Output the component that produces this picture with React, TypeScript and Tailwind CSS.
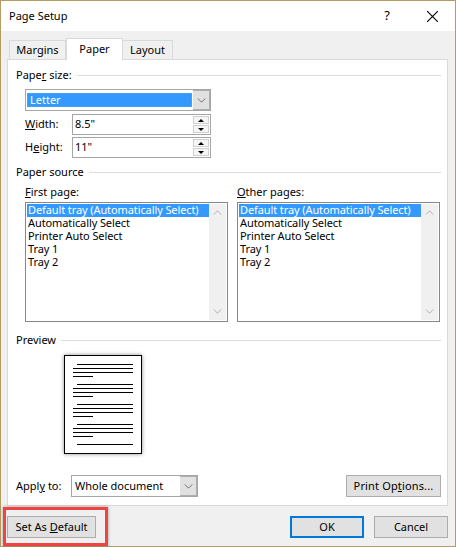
import type { ReactNode } from "react";

const trays = ["Default tray (Automatically Select)", "Automatically Select", "Printer Auto Select", "Tray 1", "Tray 2"];

function Heading({ children }: { children: ReactNode }) {
  return (
    <div className="flex h-[14px] items-center gap-[5px]">
      <span className="leading-[14px]">{children}</span>
      <div className="h-px flex-1 bg-[#dcdcdc]" />
    </div>
  );
}

function Chevron({ className }: { className: string }) {
  return (
    <svg viewBox="0 0 10 6" className={className} fill="none" stroke="currentColor" strokeWidth="1">
      <path d="M0.5 0.5 L5 5 L9.5 0.5" />
    </svg>
  );
}

function DropButton() {
  return (
    <div className="flex w-[17px] items-center justify-center self-stretch border border-l-0 border-[#adadad] bg-[#e1e1e1] text-[#5a5a5a]">
      <Chevron className="h-[5px] w-[9px]" />
    </div>
  );
}

function Spinner() {
  return (
    <div className="my-px mr-px flex w-[16px] flex-col gap-px self-stretch">
      <div className="flex flex-1 items-center justify-center border border-[#d0d0d0] bg-[#f5f5f5]">
        <div className="h-0 w-0 border-x-[3px] border-b-[3px] border-x-transparent border-b-black" />
      </div>
      <div className="flex flex-1 items-center justify-center border border-[#d0d0d0] bg-[#f5f5f5]">
        <div className="h-0 w-0 border-x-[3px] border-t-[3px] border-x-transparent border-t-black" />
      </div>
    </div>
  );
}

function SizeRow({ label, value, className }: { label: ReactNode; value: string; className: string }) {
  return (
    <div className={`flex h-[21px] items-center pl-[9px] ${className}`}>
      <span className="w-[47px]">{label}</span>
      <div className="flex h-full w-[139px] items-center border border-[#a6a6a6] pl-[2px]">
        <span className="flex-1">{value}</span>
        <Spinner />
      </div>
    </div>
  );
}

function TrayList({ label }: { label: ReactNode }) {
  return (
    <div className="w-[203px]">
      <div className="h-[14px] leading-[14px]">{label}</div>
      <div className="mt-[3px] flex h-[120px] border border-[#828790] p-px">
        <div className="min-w-0 flex-1 tracking-[-0.1px]">
          {trays.map((t, i) => (
            <div
              key={t}
              className={`h-[13px] whitespace-nowrap pl-px leading-[12px] ${i === 0 ? "bg-[#3399ff] text-white" : ""}`}
            >
              {t}
            </div>
          ))}
        </div>
        <div className="flex w-[17px] flex-col items-center justify-between bg-[#f0f0f0] py-[6px] text-[#a3a3a3]">
          <Chevron className="h-[5px] w-[9px] rotate-180" />
          <Chevron className="h-[5px] w-[9px]" />
        </div>
      </div>
    </div>
  );
}

function PagePreview() {
  const lines: number[][] = [];
  for (let p = 0; p < 4; p++) {
    const y = 9 + p * 20;
    lines.push([13, y, 69], [9, y + 4, 69], [9, y + 8, 69], [9, y + 12, 29]);
  }
  lines.push([13, 89, 69]);
  return (
    <div className="ml-[48px] mt-[8px] h-[99px] w-[78px] border border-black bg-white shadow-[0_0_4px_rgba(0,0,0,0.45)]">
      <svg viewBox="0 0 76 97" className="h-[97px] w-[76px]">
        {lines.map(([x, y, x2]) => (
          <line key={`${x}-${y}`} x1={x - 1} x2={x2 - 1} y1={y - 0.5} y2={y - 0.5} stroke="black" strokeWidth="1" />
        ))}
      </svg>
    </div>
  );
}

function Btn({ children, className }: { children: ReactNode; className: string }) {
  return (
    <div className={`flex h-[22px] items-center justify-center bg-[#e1e1e1] ${className}`}>{children}</div>
  );
}

export default function App() {
  return (
    <div className="relative flex h-[547px] w-[456px] flex-col border border-[#b89b62] bg-[#f0f0f0] font-['Noto_Sans',sans-serif] text-[11px] text-black">
      {/* title bar */}
      <div className="flex h-[30px] items-center bg-white pl-[8px] pr-[17px]">
        <span className="flex-1">Page Setup</span>
        <span className="mr-[37px] text-[13px]">?</span>
        <svg viewBox="0 0 10 10" className="h-[11px] w-[11px]" fill="none" stroke="black" strokeWidth="1">
          <path d="M0 0 L10 10 M10 0 L0 10" />
        </svg>
      </div>

      {/* tabs */}
      <div className="z-10 flex h-[28px] items-end pl-[8px]">
        <div className="flex h-[19px] w-[57px] items-center justify-center border border-b-0 border-[#d9d9d9] pt-px">Margins</div>
        <div className="-mb-px flex h-[22px] w-[57px] items-center justify-center border border-b-0 border-[#d9d9d9] bg-white">Paper</div>
        <div className="flex h-[19px] w-[50px] items-center justify-center border border-b-0 border-l-0 border-[#d9d9d9] pt-px">Layout</div>
      </div>

      {/* panel */}
      <div className="ml-[6px] flex h-[447px] w-[441px] flex-col border border-[#d9d9d9] bg-white pl-[8px] pr-[6px] pt-[8px]">
        <Heading>Pape<u>r</u> size:</Heading>
        <div className="ml-[9px] mt-[7px] flex h-[22px] w-[186px] items-center border border-[#a6a6a6] pl-px">
          <div className="mr-px flex h-[14px] flex-1 items-center border border-dotted border-[#e08a20] bg-[#3399ff] pl-[2px] text-white">Letter</div>
          <DropButton />
        </div>
        <SizeRow className="mt-[3px]" label={<><u>W</u>idth:</>} value="8.5&quot;" />
        <SizeRow className="mt-[2px]" label={<>H<u>e</u>ight:</>} value="11&quot;" />
        <div className="mt-[7px]">
          <Heading>Paper source</Heading>
        </div>
        <div className="mt-[6px] flex gap-[9px] pl-[9px]">
          <TrayList label={<><u>F</u>irst page:</>} />
          <TrayList label={<><u>O</u>ther pages:</>} />
        </div>
        <div className="mt-[11px]">
          <Heading>Preview</Heading>
        </div>
        <PagePreview />
        <div className="mt-[21px] flex h-[22px] items-center">
          <span className="w-[55px]">Appl<u>y</u> to:</span>
          <div className="flex h-full w-[127px] items-center border border-[#a6a6a6] pl-[3px]">
            <span className="flex-1">Whole document</span>
            <DropButton />
          </div>
          <Btn className="ml-auto w-[95px] border border-[#adadad] tracking-[0.15px]">
            <span>Print Op<u>t</u>ions...</span>
          </Btn>
        </div>
      </div>

      {/* footer */}
      <div className="flex items-start gap-[10px] pl-[6px] pr-[7px] pt-[10px]">
        <Btn className="mr-auto w-[89px] border border-[#adadad]">
          <span>Set As <u>D</u>efault</span>
        </Btn>
        <Btn className="w-[74px] border-2 border-[#0078d7]">OK</Btn>
        <Btn className="w-[74px] border border-[#adadad]">Cancel</Btn>
      </div>

      {/* red highlight drawn over the screenshot */}
      <div className="absolute bottom-0 left-[2px] h-[39px] w-[105px] border-[3px] border-[#f04444] shadow-[0_0_3px_rgba(0,0,0,0.35)]" />
    </div>
  );
}
